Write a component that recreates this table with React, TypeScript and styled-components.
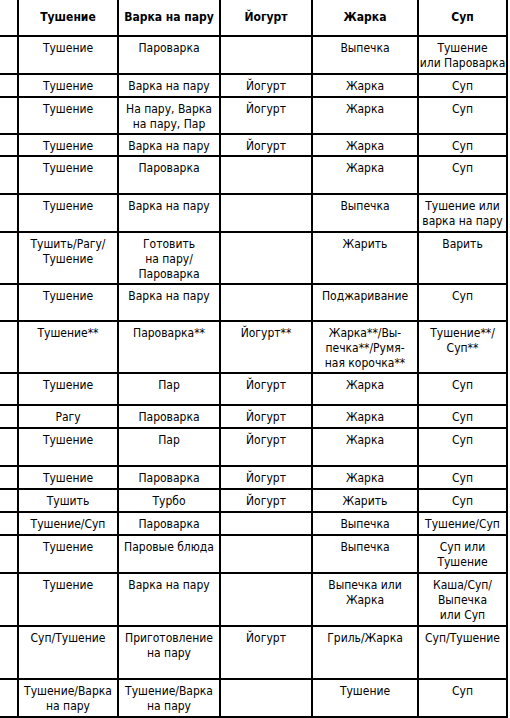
import React from "react";
import styled, { createGlobalStyle } from "styled-components";

const GlobalStyle = createGlobalStyle`
  html, body {
    margin: 0;
    padding: 0;
    background: #fff;
  }
  body {
    font-family: "DejaVu Sans", sans-serif;
    font-stretch: condensed;
    color: #000;
  }
`;

const columns = [18, 100, 102, 92, 106, 89];

const header = ["Тушение", "Варка на пару", "Йогурт", "Жарка", "Суп"];

// [height, тушение, пар, йогурт, жарка, суп]
const rows: [number, string, string, string, string, string][] = [
  [38, "Тушение", "Пароварка", "", "Выпечка", "Тушение\nили Пароварка"],
  [23, "Тушение", "Варка на пару", "Йогурт", "Жарка", "Суп"],
  [37, "Тушение", "На пару, Варка\nна пару, Пар", "Йогурт", "Жарка", "Суп"],
  [22, "Тушение", "Варка на пару", "Йогурт", "Жарка", "Суп"],
  [38, "Тушение", "Пароварка", "", "Жарка", "Суп"],
  [38, "Тушение", "Варка на пару", "", "Выпечка", "Тушение или\nварка на пару"],
  [52, "Тушить/Рагу/\nТушение", "Готовить\nна пару/\nПароварка", "", "Жарить", "Варить"],
  [37, "Тушение", "Варка на пару", "", "Поджаривание", "Суп"],
  [52, "Тушение**", "Пароварка**", "Йогурт**", "Жарка**/Вы-\nпечка**/Румя-\nная корочка**", "Тушение**/\nСуп**"],
  [32, "Тушение", "Пар", "Йогурт", "Жарка", "Суп"],
  [23, "Рагу", "Пароварка", "Йогурт", "Жарка", "Суп"],
  [38, "Тушение", "Пар", "Йогурт", "Жарка", "Суп"],
  [23, "Тушение", "Пароварка", "Йогурт", "Жарка", "Суп"],
  [23, "Тушить", "Турбо", "Йогурт", "Жарить", "Суп"],
  [23, "Тушение/Суп", "Пароварка", "", "Выпечка", "Тушение/Суп"],
  [38, "Тушение", "Паровые блюда", "", "Выпечка", "Суп или\nТушение"],
  [53, "Тушение", "Варка на пару", "", "Выпечка или\nЖарка", "Каша/Суп/\nВыпечка\nили Суп"],
  [53, "Суп/Тушение", "Приготовление\nна пару", "Йогурт", "Гриль/Жарка", "Суп/Тушение"],
  [38, "Тушение/Варка\nна пару", "Тушение/Варка\nна пару", "", "Тушение", "Суп"],
];

const Page = styled.div`
  width: 510px;
  height: 718px;
  overflow: hidden;
`;

const Table = styled.table`
  table-layout: fixed;
  border-collapse: collapse;
  width: 507px;
  font-size: 12px;
  line-height: 15px;
`;

const Row = styled.tr<{ $h: number }>`
  height: ${({ $h }) => $h}px;
`;

const HeadCell = styled.th`
  border: 2px solid #000;
  border-top: none;
  padding: 0;
  font-weight: bold;
  text-align: center;
  vertical-align: middle;
  white-space: pre;
  overflow: hidden;

  &:first-child {
    border-left: none;
  }
`;

const Cell = styled.td`
  border: 2px solid #000;
  padding: 4px 0 0;
  text-align: center;
  vertical-align: top;
  white-space: pre;
  overflow: hidden;

  &:first-child {
    border-left: none;
  }
`;

export default function App() {
  return (
    <Page>
      <GlobalStyle />
      <Table>
        <colgroup>
          {columns.map((w, i) => (
            <col key={i} style={{ width: w }} />
          ))}
        </colgroup>
        <thead>
          <Row $h={36}>
            <HeadCell />
            {header.map((h) => (
              <HeadCell key={h}>{h}</HeadCell>
            ))}
          </Row>
        </thead>
        <tbody>
          {rows.map(([h, ...cells], i) => (
            <Row key={i} $h={h}>
              <Cell />
              {cells.map((c, j) => (
                <Cell key={j}>{c}</Cell>
              ))}
            </Row>
          ))}
        </tbody>
      </Table>
    </Page>
  );
}
